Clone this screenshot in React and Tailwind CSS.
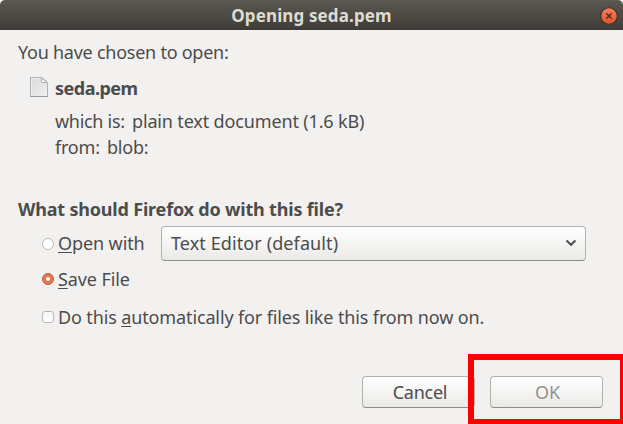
import React from "react";

function FileIcon() {
  return (
    <svg width="18" height="20" viewBox="0 0 18 20" className="block shrink-0">
      <defs>
        <linearGradient id="paper" x1="0" y1="0" x2="1" y2="1">
          <stop offset="0" stopColor="#d9d9d9" />
          <stop offset="1" stopColor="#f0f0f0" />
        </linearGradient>
      </defs>
      <path d="M.5.5H12L17.5 5.5V19.5H.5Z" fill="url(#paper)" stroke="#b2b2b2" />
      <path d="M1.5 18.5V1.5H10.5" fill="none" stroke="#efefef" />
      <path d="M11.5 1V5.5H17Z" fill="#fafafa" stroke="#b0b0b0" />
      <path d="M.5 19.5H17.5" stroke="#969696" />
    </svg>
  );
}

function CloseButton() {
  return (
    <svg width="18" height="18" viewBox="0 0 18 18" className="block">
      <defs>
        <linearGradient id="close" x1="0" y1="0" x2="0" y2="1">
          <stop offset="0" stopColor="#f48161" />
          <stop offset="1" stopColor="#e5511f" />
        </linearGradient>
      </defs>
      <circle cx="9" cy="9" r="8.3" fill="url(#close)" stroke="#34332e" strokeWidth="1.1" />
      <path d="M6.3 6.3L11.7 11.7M11.7 6.3L6.3 11.7" stroke="#43301f" strokeWidth="1.4" />
    </svg>
  );
}

function Radio({ checked }) {
  return checked ? (
    <span className="flex size-3 shrink-0 items-center justify-center rounded-full border border-[#c0623f] bg-[#e9764b]">
      <span className="size-1 rounded-full bg-white" />
    </span>
  ) : (
    <span className="size-3 shrink-0 rounded-full border border-[#b9b7b4] bg-white" />
  );
}

function Key({ children }) {
  return <u className="underline decoration-1 underline-offset-2">{children}</u>;
}

const surface =
  "flex items-center rounded-[4px] border border-[#b4b2ae] border-b-[#8f8d8a] bg-linear-to-b from-white to-[#ebeae8]";

export default function App() {
  return (
    <div className="relative flex h-[424px] w-[623px] flex-col overflow-hidden bg-white font-['Noto_Sans',sans-serif] text-[18px] leading-[26px] whitespace-nowrap text-[#4c4c4c]">
      <header className="grid h-[30px] shrink-0 grid-cols-[1fr_auto_1fr] items-center rounded-t-[5px] border-t border-[#5d5b54] bg-linear-to-b from-[#5a574f] to-[#3d3c37]">
        <span />
        <h1 className="text-[17px] font-bold tracking-[0.12px] text-[#dfdbd2]">Opening seda.pem</h1>
        <div className="flex justify-end pr-[5px]">
          <CloseButton />
        </div>
      </header>
      <main className="flex grow flex-col bg-[#f2f1f0] pt-[9px] pl-[18px]">
        <p className="tracking-[-0.25px]">You have chosen to open:</p>
        <div className="mt-[10px] flex items-start gap-[7px] pl-3">
          <div className="pt-0.5"><FileIcon /></div>
          <div>
            <p className="font-bold tracking-[-0.5px]">seda.pem</p>
            <p className="mt-[7px] flex">
              <span className="w-[77px] tracking-[-0.3px]">which is:</span>
              <span className="tracking-[-0.15px]">plain text document (1.6 kB)</span>
            </p>
            <p className="flex">
              <span className="w-[52px] tracking-[-0.2px]">from:</span>
              <span className="tracking-[-0.2px]">blob:</span>
            </p>
          </div>
        </div>
        <h2 className="mt-9 font-bold tracking-[-0.19px]">What should Firefox do with this file?</h2>
        <div className="mt-1 flex h-[35px] items-center pl-6">
          <label className="flex w-[119px] items-center gap-1 tracking-[-0.1px]">
            <Radio />
            <span className="-mt-0.5"><Key>O</Key>pen with</span>
          </label>
          <div className={surface + " h-[35px] w-[425px] justify-between pr-2 pl-[9px]"}>
            <span className="-mt-0.5 tracking-[0.1px]">Text Editor (default)</span>
            <svg width="12" height="8" viewBox="0 0 12 8" className="-mt-0.5"><path d="M1.5 1.5L6 5.8L10.5 1.5" fill="none" stroke="#4c4c4c" strokeWidth="2" /></svg>
          </div>
        </div>
        <label className="mt-[5px] flex items-center gap-1 pl-6 tracking-[-0.1px]">
          <Radio checked />
          <span><Key>S</Key>ave File</span>
        </label>
        <label className="mt-3 flex items-center gap-1 pl-6 tracking-[-0.13px]">
          <span className="size-3 shrink-0 rounded-[3px] border border-[#b9b7b4] bg-linear-to-b from-[#f6f6f6] to-white" />
          <span>Do this <Key>a</Key>utomatically for files like this from now on.</span>
        </label>
        <div className="mt-[46px] flex gap-[15px] pl-[344px]">
          <div className={surface + " h-8 w-[113px] justify-center pl-[3px] tracking-[-0.25px]"}>Cancel</div>
          <div className={surface + " h-8 w-[113px] justify-center pl-0.5 text-[#929190]"}>OK</div>
        </div>
      </main>
      <div className="absolute top-[354px] left-[468px] h-[70px] w-[155px] border-[6px] border-r-[3px] border-b-[5px] border-[#ff0000]" />
    </div>
  );
}
